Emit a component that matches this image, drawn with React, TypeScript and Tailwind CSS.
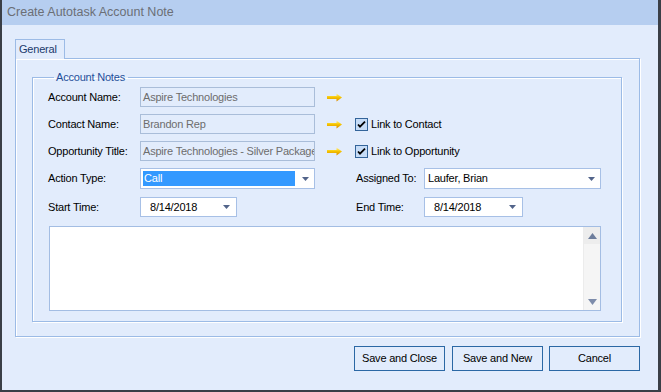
import React from 'react';

const DropArrow: React.FC = () => (
    <svg width="7" height="4" viewBox="0 0 7 4" className="shrink-0">
        <path d="M0 0h7L3.5 4z" fill="#52648a" />
    </svg>
);

const LinkArrow: React.FC = () => (
    <svg width="15" height="9" viewBox="0 0 15 9" className="shrink-0">
        <defs>
            <linearGradient id="goldArrow" x1="0" y1="0" x2="0" y2="1">
                <stop offset="0" stopColor="#fff3a6" />
                <stop offset="0.45" stopColor="#f7c800" />
                <stop offset="1" stopColor="#d98800" />
            </linearGradient>
        </defs>
        <path d="M0 3h9.5V0.5L15 4.5L9.5 8.5V6H0z" fill="url(#goldArrow)" />
    </svg>
);

const CheckBox: React.FC = () => (
    <svg width="13" height="13" viewBox="0 0 13 13" className="shrink-0">
        <rect x="0.5" y="0.5" width="12" height="12" fill="#c6dcf7" stroke="#33649a" />
        <path d="M3 6.5l2 2.2L10 3.6" fill="none" stroke="#000" strokeWidth="1.8" />
    </svg>
);

const ReadOnlyBox: React.FC<{ value: string }> = ({ value }) => (
    <div className="w-[175px] h-[20px] border border-[#a9bdd9] pl-[2px] flex items-center overflow-hidden whitespace-nowrap text-[#6d6d6d]">
        {value}
    </div>
);

const Label: React.FC<{ text: string; width: string }> = ({ text, width }) => (
    <div className={`${width} shrink-0`}>{text}</div>
);

const App: React.FC = () => {
    return (
        <div className="w-[661px] h-[392px] bg-[#e2ecfc] border-l-2 border-r-[3px] border-b-2 border-[#3a3f47] flex flex-col font-['Liberation_Sans',Arial,sans-serif] text-[11px] tracking-[-0.2px] text-black">
            {/* title bar */}
            <div className="h-[25px] shrink-0 bg-[#b6cef0] flex items-center pl-[5px] text-[12.5px] tracking-normal text-[#6b6f76]">
                Create Autotask Account Note
            </div>

            <div className="pl-[13px] pt-[14px]">
                {/* tab */}
                <div className="relative z-10 -mb-px w-[50px] h-[20px] border border-b-0 border-[#9cbbe6] bg-[#e2ecfc] pl-[3px] pt-[2px] leading-[14px] text-[#1b3a6b]">
                    General
                </div>

                {/* tab page */}
                <div className="w-[625px] h-[279px] border border-[#9cbbe6] shadow-[inset_1px_1px_0_#fff,1px_1px_0_#fff] pt-[11px] pl-[16px]">
                    <fieldset className="w-[590px] border border-[#9cbbe6] shadow-[inset_1px_1px_0_#fff,1px_1px_0_#fff] pl-[15px] pb-[10px]">
                        <legend className="ml-[6px] pl-[2px] pr-[3px] leading-[14px] text-[#1f4f9a]">
                            Account Notes
                        </legend>

                        <div className="flex flex-col mt-[3px]">
                            <div className="flex items-center h-[20px]">
                                <Label text="Account Name:" width="w-[92px]" />
                                <ReadOnlyBox value="Aspire Technologies" />
                                <div className="ml-[12px]">
                                    <LinkArrow />
                                </div>
                            </div>

                            <div className="flex items-center h-[20px] mt-[7px]">
                                <Label text="Contact Name:" width="w-[92px]" />
                                <ReadOnlyBox value="Brandon Rep" />
                                <div className="ml-[12px]">
                                    <LinkArrow />
                                </div>
                                <div className="ml-[13px]">
                                    <CheckBox />
                                </div>
                                <span className="ml-[3px]">Link to Contact</span>
                            </div>

                            <div className="flex items-center h-[20px] mt-[7px]">
                                <Label text="Opportunity Title:" width="w-[92px]" />
                                <ReadOnlyBox value="Aspire Technologies - Silver Package" />
                                <div className="ml-[12px]">
                                    <LinkArrow />
                                </div>
                                <div className="ml-[13px]">
                                    <CheckBox />
                                </div>
                                <span className="ml-[3px]">Link to Opportunity</span>
                            </div>

                            <div className="flex items-center h-[21px] mt-[7px]">
                                <Label text="Action Type:" width="w-[92px]" />
                                <div className="w-[175px] h-[21px] border border-[#a7c0e6] bg-white flex items-center justify-between pl-[1px] pr-[5px]">
                                    <div className="ml-[1px] w-[152px] h-[15px] bg-[#3399ff] text-white pl-px flex items-center">
                                        Call
                                    </div>
                                    <DropArrow />
                                </div>
                                <div className="ml-[41px]">
                                    <Label text="Assigned To:" width="w-[68px]" />
                                </div>
                                <div className="w-[177px] h-[21px] border border-[#a7c0e6] bg-white flex items-center justify-between pl-[3px] pr-[5px]">
                                    <span>Laufer, Brian</span>
                                    <DropArrow />
                                </div>
                            </div>

                            <div className="flex items-center h-[20px] mt-[8px]">
                                <Label text="Start Time:" width="w-[92px]" />
                                <div className="w-[97px] h-[20px] border border-[#a7c0e6] bg-white flex items-center justify-between pl-[9px] pr-[6px]">
                                    <span>8/14/2018</span>
                                    <DropArrow />
                                </div>
                                <div className="ml-[119px]">
                                    <Label text="End Time:" width="w-[68px]" />
                                </div>
                                <div className="w-[99px] h-[20px] border border-[#a7c0e6] bg-white flex items-center justify-between pl-[9px] pr-[6px]">
                                    <span>8/14/2018</span>
                                    <DropArrow />
                                </div>
                            </div>

                            {/* notes box */}
                            <div className="ml-px mt-[9px] w-[552px] h-[85px] border border-[#a3bde3] bg-white flex justify-end">
                                <div className="w-[17px] h-full bg-[#f5f5f5] border-l border-[#ececec] flex flex-col justify-between items-center">
                                    <div className="w-full h-[17px] bg-[#ededed] flex items-center justify-center">
                                        <svg width="9" height="6" viewBox="0 0 9 6">
                                            <path d="M4.5 0L9 6H0z" fill="#6d7d9c" />
                                        </svg>
                                    </div>
                                    <div className="w-full h-[17px] flex items-center justify-center">
                                        <svg width="9" height="6" viewBox="0 0 9 6">
                                            <path d="M0 0h9L4.5 6z" fill="#7d8cab" />
                                        </svg>
                                    </div>
                                </div>
                            </div>
                        </div>
                    </fieldset>
                </div>

                {/* buttons */}
                <div className="w-[625px] flex justify-end mt-[9px]">
                    <button className="w-[91px] h-[25px] border border-[#2b68a5] bg-[#e2ecfc]">Save and Close</button>
                    <button className="ml-[7px] w-[91px] h-[25px] border border-[#2b68a5] bg-[#e2ecfc]">Save and New</button>
                    <button className="ml-[6px] w-[91px] h-[25px] border border-[#2b68a5] bg-[#e2ecfc]">Cancel</button>
                </div>
            </div>
        </div>
    );
};

export default App;
